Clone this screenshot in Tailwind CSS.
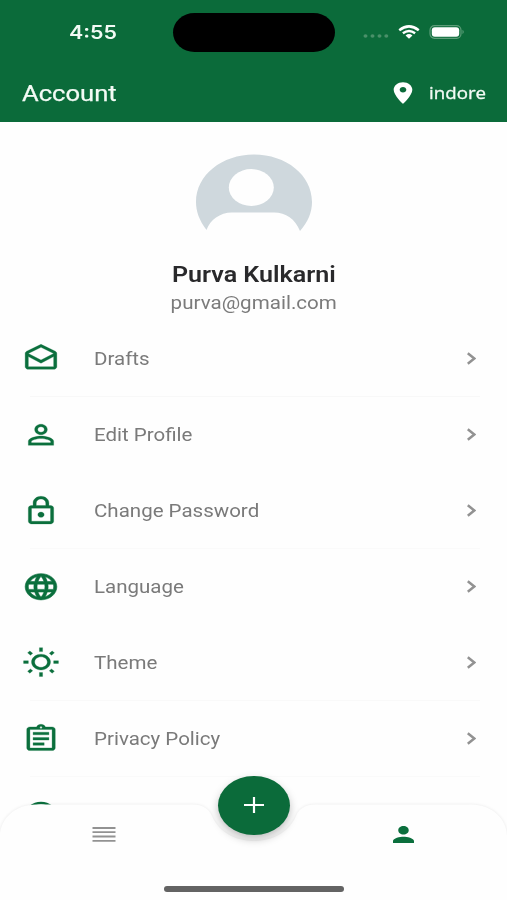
<!DOCTYPE html>
<html lang="en">
<head>
<meta charset="utf-8">
<meta name="viewport" content="width=device-width, initial-scale=1">
<title>Account</title>
<script src="https://cdn.jsdelivr.net/npm/@tailwindcss/browser@4"></script>
</head>
<body class="bg-[#fefefe] font-[Roboto,sans-serif]">
<div class="relative flex h-[900px] w-[507px] flex-col overflow-hidden bg-[#fefefe]">
  <header class="flex h-[122px] shrink-0 flex-col bg-[#0b6b3a] text-[#f3fbf5]">
    <div class="flex h-16 items-center pl-[69px] pr-[42px]">
      <div class="w-[104px] pt-[2px]"><span class="inline-block origin-left scale-x-[1.19] font-[Inter,sans-serif] text-[18px] font-semibold leading-6">4:55</span></div>
      <div class="h-[39px] w-[162px] rounded-[22px/20px] bg-black"></div>
      <div class="ml-auto flex items-center">
        <svg class="mt-2 h-1 w-[26px] fill-[#4a9069]" viewBox="0 0 26 4"><ellipse cx="2.5" cy="2" rx="2" ry="1.700"/><ellipse cx="9.500" cy="2" rx="2" ry="1.700"/><ellipse cx="16.500" cy="2" rx="2" ry="1.700"/><ellipse cx="23.300" cy="2" rx="2" ry="1.700"/></svg>
        <svg class="ml-[9px] h-[14px] w-[22px]" viewBox="0 0 23 14" preserveAspectRatio="none" fill="none" stroke="white"><path stroke-width="2.600" d="M1.300 5.200Q11.500-2.500 21.700 5.200"/><path stroke-width="2.500" d="M5.100 8.300Q11.500 3.600 17.900 8.300"/><path fill="white" stroke="none" d="M7.900 10.500Q11.500 7.700 15.100 10.500L11.500 13.700Z"/></svg>
        <svg class="ml-[9px] h-[14px] w-9" viewBox="0 0 36 14"><rect x="1" y=".7" width="31" height="12.600" rx="4.500" fill="none" stroke="#5c9d78" stroke-width="1.200"/><rect x="2.800" y="2.300" width="27.400" height="9.400" rx="3" fill="white"/><path d="M33.500 4.800Q36 7 33.500 9.200Z" fill="#5c9d78"/></svg>
      </div>
    </div>
    <div class="flex flex-1 items-center justify-between pl-[22px] pr-[21px]">
      <h1 class="w-24 whitespace-nowrap pt-[2px]"><span class="inline-block origin-left scale-x-[1.19] text-[21.500px] leading-7 [-webkit-text-stroke:0.25px]">Account</span></h1>
      <div class="flex items-center">
        <svg class="h-[26px] w-[32px] fill-white" viewBox="0 0 24 24" preserveAspectRatio="none"><path d="M12 2C8.130 2 5 5.130 5 9c0 5.250 7 13 7 13s7-7.750 7-13c0-3.870-3.130-7-7-7zm0 9.500c-1.380 0-2.500-1.120-2.500-2.500s1.120-2.500 2.500-2.500 2.500 1.120 2.500 2.500-1.120 2.500-2.500 2.500z"/></svg>
        <div class="ml-[10px] w-[57px] whitespace-nowrap"><span class="inline-block origin-left scale-x-[1.1] font-['Open_Sans',sans-serif] text-[17px] leading-6 [-webkit-text-stroke:0.35px]">indore</span></div>
      </div>
    </div>
  </header>

  <section class="flex h-[199px] shrink-0 flex-col items-center pt-[31.500px]">
    <svg class="h-[78px] w-[116px]" viewBox="0 0 116 78"><path fill="#cfd8dd" d="M10.500 76C3 66 0 57 0 48C0 21 26 .5 58 .5S116 21 116 48C116 58 112 68 104 77C99 65 90 58.500 78 58.500H36C24 58.500 14 66 10.500 76Z"/><ellipse cx="55.300" cy="33.500" rx="22.500" ry="18.500" fill="#fefefe"/></svg>
    <h2 class="mt-[29px] scale-x-[1.14] whitespace-nowrap text-[22px] font-semibold leading-7 text-[#29292b]">Purva Kulkarni</h2>
    <p class="scale-x-[1.175] whitespace-nowrap text-[17.500px] leading-7 text-[#7b7b7b]">purva@gmail.com</p>
  </section>

  <main class="flex flex-col text-[17.500px] text-[#7a7a7a]">
    <div class="relative flex h-[76px] items-center pl-[22px] pr-[31px]">
      <svg class="-mt-px h-[31.500px] w-[38px] fill-[#0b6f3d] stroke-[#0b6f3d] stroke-[0.2]" viewBox="0 0 24 24" preserveAspectRatio="none"><path d="M21.990 8c0-.72-.37-1.350-.94-1.700L12 1 2.950 6.300C2.380 6.650 2 7.280 2 8v10c0 1.100.9 2 2 2h16c1.100 0 2-.9 2-2l-.01-10zM20 8v.01L12 13 4 8l8-4.680L20 8zM4 18v-7.660l8 5.020 8-5.020L20 18H4z"/></svg>
      <span class="ml-[34px] origin-left scale-x-[1.172] whitespace-nowrap">Drafts</span>
      <svg class="mb-0.5 ml-auto h-[13px] w-[9px]" viewBox="0 0 9 13" fill="none" stroke="#929292" stroke-width="2.500"><path d="M.8 1.200L7.300 6.500.8 11.800"/></svg>
      <div class="absolute bottom-0 left-[30px] right-[27px] h-px bg-[#f8f8f8]"></div>
    </div>
    <div class="flex h-[76px] items-center pl-[22px] pr-[31px]">
      <svg class="-mt-px h-[31.500px] w-[38px] fill-[#0b6f3d] stroke-[#0b6f3d] stroke-[0.2]" viewBox="0 0 24 24" preserveAspectRatio="none"><path d="M12 5.900c1.160 0 2.100.94 2.100 2.100s-.94 2.100-2.100 2.100S9.900 9.160 9.900 8s.94-2.100 2.100-2.100m0 9c2.970 0 6.100 1.460 6.100 2.100v1.100H5.900V17c0-.64 3.130-2.100 6.100-2.100M12 4C9.790 4 8 5.790 8 8s1.790 4 4 4 4-1.790 4-4-1.790-4-4-4zm0 9c-2.670 0-8 1.340-8 4v3h16v-3c0-2.660-5.330-4-8-4z"/></svg>
      <span class="ml-[34px] origin-left scale-x-[1.172] whitespace-nowrap">Edit Profile</span>
      <svg class="mb-0.5 ml-auto h-[13px] w-[9px]" viewBox="0 0 9 13" fill="none" stroke="#929292" stroke-width="2.500"><path d="M.8 1.200L7.300 6.500.8 11.800"/></svg>
    </div>
    <div class="relative flex h-[76px] items-center pl-[22px] pr-[31px]">
      <svg class="-mt-px h-[31.500px] w-[38px] fill-[#0b6f3d] stroke-[#0b6f3d] stroke-[0.2]" viewBox="0 0 24 24" preserveAspectRatio="none"><path d="M18 8h-1V6c0-2.760-2.240-5-5-5S7 3.240 7 6v2H6c-1.100 0-2 .9-2 2v10c0 1.100.9 2 2 2h12c1.100 0 2-.9 2-2V10c0-1.100-.9-2-2-2zM9 6c0-1.660 1.340-3 3-3s3 1.340 3 3v2H9V6zm9 14H6V10h12v10zm-6-3c1.100 0 2-.9 2-2s-.9-2-2-2-2 .9-2 2 .9 2 2 2z"/></svg>
      <span class="ml-[34px] origin-left scale-x-[1.172] whitespace-nowrap">Change Password</span>
      <svg class="mb-0.5 ml-auto h-[13px] w-[9px]" viewBox="0 0 9 13" fill="none" stroke="#929292" stroke-width="2.500"><path d="M.8 1.200L7.300 6.500.8 11.800"/></svg>
      <div class="absolute bottom-0 left-[30px] right-[27px] h-px bg-[#fafafa]"></div>
    </div>
    <div class="flex h-[76px] items-center pl-[22px] pr-[31px]">
      <svg class="-mt-px h-[31.500px] w-[38px] fill-[#0b6f3d] stroke-[#0b6f3d] stroke-[0.4]" viewBox="0 0 24 24" preserveAspectRatio="none"><path d="M11.990 2C6.470 2 2 6.480 2 12s4.470 10 9.990 10C17.520 22 22 17.520 22 12S17.520 2 11.990 2zm6.930 6h-2.950c-.32-1.250-.78-2.450-1.380-3.560 1.840.63 3.370 1.910 4.330 3.560zM12 4.040c.83 1.200 1.480 2.530 1.910 3.960h-3.820c.43-1.430 1.080-2.760 1.910-3.960zM4.260 14C4.100 13.360 4 12.690 4 12s.1-1.360.26-2h3.380c-.08.66-.14 1.320-.14 2s.06 1.340.14 2H4.260zm.82 2h2.950c.32 1.250.78 2.450 1.380 3.560-1.840-.63-3.370-1.900-4.330-3.560zm2.950-8H5.080c.96-1.660 2.490-2.930 4.330-3.560C8.810 5.550 8.350 6.750 8.030 8zM12 19.960c-.83-1.200-1.480-2.530-1.910-3.960h3.820c-.43 1.430-1.080 2.760-1.910 3.960zM14.340 14H9.660c-.09-.66-.16-1.320-.16-2s.07-1.350.16-2h4.680c.09.65.16 1.320.16 2s-.07 1.340-.16 2zm.25 5.560c.6-1.110 1.060-2.310 1.380-3.560h2.950c-.96 1.650-2.490 2.930-4.330 3.560zM16.360 14c.08-.66.14-1.320.14-2s-.06-1.340-.14-2h3.380c.16.64.26 1.310.26 2s-.1 1.360-.26 2h-3.380z"/></svg>
      <span class="ml-[34px] origin-left scale-x-[1.172] whitespace-nowrap">Language</span>
      <svg class="mb-0.5 ml-auto h-[13px] w-[9px]" viewBox="0 0 9 13" fill="none" stroke="#929292" stroke-width="2.500"><path d="M.8 1.200L7.300 6.500.8 11.800"/></svg>
    </div>
    <div class="relative flex h-[76px] items-center pl-[22px] pr-[31px]">
      <svg class="-mt-px h-[31.500px] w-[38px] fill-[#0b6f3d] stroke-[#0b6f3d] stroke-[0.2]" viewBox="0 0 24 24" preserveAspectRatio="none"><path d="M6.760 4.840l-1.800-1.790-1.410 1.410 1.790 1.790 1.420-1.410zM4 10.500H1v2h3v-2zm9-9.950h-2V3.500h2V.55zm7.450 3.910l-1.410-1.410-1.790 1.790 1.410 1.410 1.790-1.790zm-3.210 13.700l1.790 1.800 1.410-1.410-1.800-1.790-1.400 1.400zM20 10.500v2h3v-2h-3zm-8-5c-3.310 0-6 2.690-6 6s2.690 6 6 6 6-2.690 6-6-2.690-6-6-6zm0 10c-2.210 0-4-1.790-4-4s1.790-4 4-4 4 1.790 4 4-1.790 4-4 4zm-1 6.950h2V19.500h-2v2.950zm-7.450-3.910l1.410 1.410 1.790-1.800-1.410-1.410-1.790 1.800z"/></svg>
      <span class="ml-[34px] origin-left scale-x-[1.172] whitespace-nowrap">Theme</span>
      <svg class="mb-0.5 ml-auto h-[13px] w-[9px]" viewBox="0 0 9 13" fill="none" stroke="#929292" stroke-width="2.500"><path d="M.8 1.200L7.300 6.500.8 11.800"/></svg>
      <div class="absolute bottom-0 left-[30px] right-[27px] h-px bg-[#f9f9f9]"></div>
    </div>
    <div class="relative flex h-[76px] items-center pl-[22px] pr-[31px]">
      <svg class="-mt-px h-[31.500px] w-[38px] fill-[#0b6f3d] stroke-[#0b6f3d] stroke-[0.2]" viewBox="0 0 24 24" preserveAspectRatio="none"><path d="M7 15h7v2H7zm0-4h10v2H7zm0-4h10v2H7zm12-4h-4.180C14.400 1.840 13.300 1 12 1c-1.300 0-2.400.84-2.820 2H5c-1.100 0-2 .9-2 2v14c0 1.100.9 2 2 2h14c1.100 0 2-.9 2-2V5c0-1.100-.9-2-2-2zm-7-.25c.41 0 .75.34.75.75s-.34.75-.75.75-.75-.34-.75-.75.34-.75.75-.75zM19 19H5V5h14v14z"/></svg>
      <span class="ml-[34px] origin-left scale-x-[1.172] whitespace-nowrap">Privacy Policy</span>
      <svg class="mb-0.5 ml-auto h-[13px] w-[9px]" viewBox="0 0 9 13" fill="none" stroke="#929292" stroke-width="2.500"><path d="M.8 1.200L7.300 6.500.8 11.800"/></svg>
      <div class="absolute bottom-0 left-[30px] right-[27px] h-px bg-[#fafafa]"></div>
    </div>
    <div class="flex h-[76px] items-center pl-[22px] pr-[31px]">
      <svg class="-mt-px h-[31.500px] w-[38px]" viewBox="0 0 24 24" preserveAspectRatio="none" fill="none" stroke="#0b6f3d" stroke-width="2"><circle cx="12" cy="12" r="9"/></svg>
    </div>
  </main>

  <nav class="absolute bottom-0 left-0 h-[130px] w-[507px]">
    <svg class="absolute inset-0 h-full w-full" viewBox="0 0 507 130"><path class="drop-shadow-[0_0_1.5px_rgba(0,0,0,0.09)]" fill="#fefefe" d="M0 136V66C0 49 15 34.500 36 34.500H192C203 34.500 209 39 212 46C219 62 235 71 254 71S289 62 296 46C299 39 305 34.500 316 34.500H471C492 34.500 507 49 507 66V136Z"/></svg>
    <div class="absolute left-[218px] top-[5.500px] flex h-[59.500px] w-[72px] items-center justify-center rounded-[50%] bg-[#0b6b3a] shadow-[0_4px_8px_rgba(0,0,0,0.25)]">
      <svg class="h-4 w-5" viewBox="0 0 20 16" stroke="white" stroke-width="2.200"><path d="M0 8H20M10 0V16"/></svg>
    </div>
    <div class="relative flex justify-between pl-[92px] pr-[93px] pt-[56px]">
      <svg class="h-[17px] w-6" viewBox="0 0 24 17" stroke="#929292" stroke-width="1.800"><path d="M.5 2H23.500M.5 6.200H23.500M.5 10.500H23.500M.5 14.800H23.500"/></svg>
      <svg class="h-[17px] w-[21px] fill-[#0b6f3d]" viewBox="4 4 16 16" preserveAspectRatio="none"><path d="M12 12c2.210 0 4-1.790 4-4s-1.790-4-4-4-4 1.790-4 4 1.790 4 4 4zm0 2c-2.670 0-8 1.340-8 4v2h16v-2c0-2.660-5.330-4-8-4z"/></svg>
    </div>
    <div class="absolute bottom-[8.500px] left-[164px] h-[5.500px] w-[180px] rounded-full bg-[#636363]"></div>
  </nav>
</div>
</body>
</html>
